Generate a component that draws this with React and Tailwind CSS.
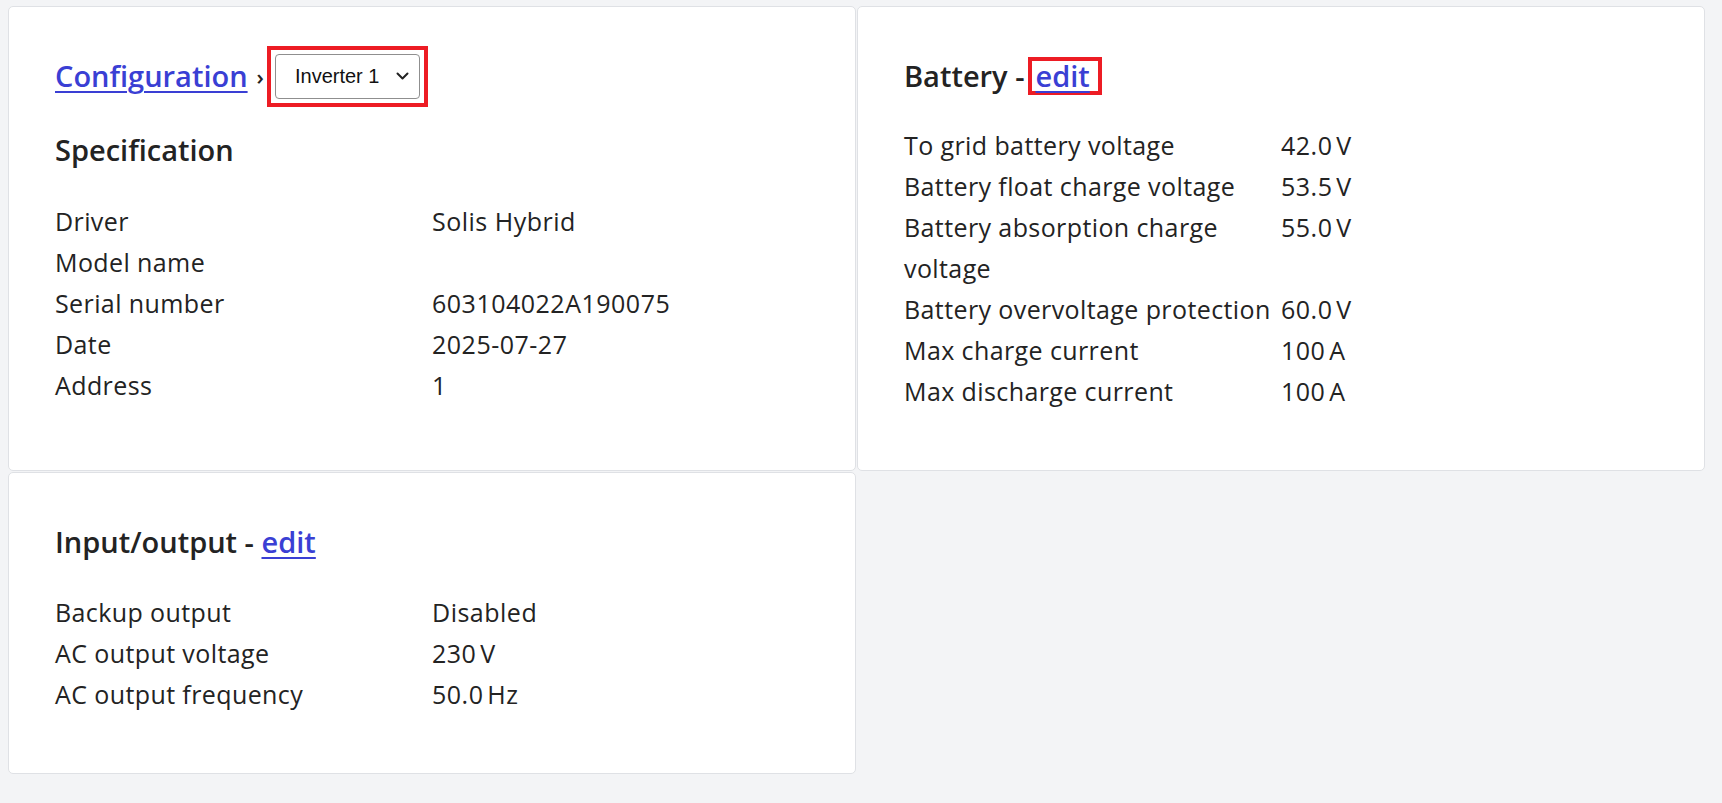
const FONT = { fontFamily: '"Open Sans", "Liberation Sans", sans-serif' };

// ─── Small pieces ─────────────────────────────────────────────────────────────

function Card({ children, className = '' }) {
  return (
    <div className={'rounded-[5px] border border-[#dfe1e5] bg-white px-[46px] pt-[38px] ' + className}>
      {children}
    </div>
  );
}

function Link({ children }) {
  return <a href="#" className="text-[#3a3fd4] underline decoration-[2px] underline-offset-[4px]">{children}</a>;
}

function Rows({ rows }) {
  return (
    <div className="grid grid-cols-2 text-[25px] leading-[41px] text-[#232323]">
      {rows.map(([k, v]) => (
        <div key={k} className="contents">
          <div className="tracking-[0.4px]">{k}</div>
          <div className="tracking-[0.5px]">{v}</div>
        </div>
      ))}
    </div>
  );
}

function FakeSelect() {
  return (
    <div className="border-[4px] border-[#ed1c24] p-[4px]">
      <div className="flex h-[45px] w-[145px] items-center justify-between rounded-[4px] border border-[#8f8f8f] bg-white pl-[19px] pr-[10px]">
        <span className="text-[20px] font-normal text-[#111]" style={{ fontFamily: '"Liberation Sans", Arial, sans-serif' }}>Inverter 1</span>
        <svg width="13" height="8" viewBox="0 0 13 8" fill="none" stroke="#222" strokeWidth="2" strokeLinecap="round" strokeLinejoin="round">
          <path d="M1.5 1.5l5 5 5-5" />
        </svg>
      </div>
    </div>
  );
}

// ─── Page ─────────────────────────────────────────────────────────────────────

export default function App() {
  const spec = [
    ['Driver', 'Solis Hybrid'],
    ['Model name', ''],
    ['Serial number', '603104022A190075'],
    ['Date', '2025-07-27'],
    ['Address', '1'],
  ];
  const battery = [
    ['To grid battery voltage', '42.0\u202FV'],
    ['Battery float charge voltage', '53.5\u202FV'],
    ['Battery absorption charge voltage', '55.0\u202FV'],
    ['Battery overvoltage protection', '60.0\u202FV'],
    ['Max charge current', '100\u202FA'],
    ['Max discharge current', '100\u202FA'],
  ];
  const io = [
    ['Backup output', 'Disabled'],
    ['AC output voltage', '230\u202FV'],
    ['AC output frequency', '50.0\u202FHz'],
  ];

  return (
    <div className="min-h-screen bg-[#f3f4f6] pl-[8px] pt-[6px]" style={FONT}>
      <div className="grid grid-cols-[848px_848px] gap-px">

        {/* Configuration / specification */}
        <Card className="pb-[58px]">
          <div className="flex h-[62px] items-center text-[29px] font-semibold text-[#232323]">
            <Link>Configuration</Link>
            <span className="ml-[9px] mr-[3px] text-[22px]">›</span>
            <FakeSelect />
          </div>
          <h2 className="mt-[23px] text-[29px] font-semibold leading-[40px] text-[#232323]">Specification</h2>
          <div className="mt-[31px]">
            <Rows rows={spec} />
          </div>
        </Card>

        {/* Battery */}
        <Card className="pb-[58px]">
          <div className="flex h-[62px] items-center text-[29px] font-semibold text-[#232323]">
            <span>Battery -</span>
            <span className="ml-[3px] border-[4px] border-[#ed1c24] pl-[4px] pr-[8px] leading-[30px]">
              <Link>edit</Link>
            </span>
          </div>
          <div className="mt-[18px]">
            <Rows rows={battery} />
          </div>
        </Card>

        {/* Input / output */}
        <Card className="pb-[58px]">
          <div className="flex h-[62px] items-center text-[29px] font-semibold text-[#232323]">
            <span>Input/output -&nbsp;</span>
            <Link>edit</Link>
          </div>
          <div className="mt-[19px]">
            <Rows rows={io} />
          </div>
        </Card>
      </div>
    </div>
  );
}
